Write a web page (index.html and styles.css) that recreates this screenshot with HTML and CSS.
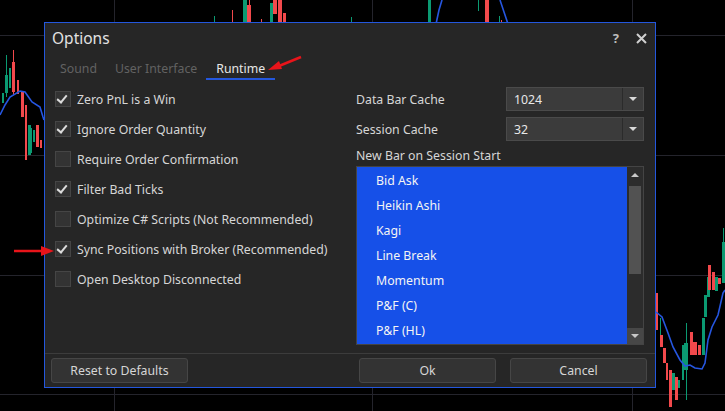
FILE: index.html
```html
<!DOCTYPE html>
<html>
<head>
  <title>Options</title>
  <meta name="viewport" content="width=device-width, initial-scale=1">
  <link rel="stylesheet" href="styles.css">
</head>
<body>

  <div class="screen">
    <!-- chart behind the dialog -->
    <svg class="chart" width="725" height="411" viewBox="0 0 725 411">
      <g class="grid">
        <line x1="0" y1="35.5" x2="725" y2="35.5"/>
        <line x1="0" y1="155.5" x2="725" y2="155.5"/>
        <line x1="0" y1="275.5" x2="725" y2="275.5"/>
        <line x1="0" y1="394.5" x2="725" y2="394.5"/>
        <line x1="114.5" y1="0" x2="114.5" y2="411"/>
        <line x1="372.5" y1="0" x2="372.5" y2="411"/>
        <line x1="632.5" y1="0" x2="632.5" y2="411"/>
      </g>
      <g class="up">
        <rect x="214" y="16" width="1" height="8"/>
        <rect x="243" y="0" width="4" height="24"/>
        <rect x="270" y="3" width="3" height="21"/>
        <rect x="351" y="17" width="1" height="7"/>
        <rect x="428" y="0" width="3" height="24"/>
        <rect x="478" y="0" width="1" height="11"/>
        <rect x="499" y="16" width="1" height="8"/>
        <rect x="2" y="93" width="2" height="10"/>
        <rect x="6" y="55" width="1" height="42"/>
        <rect x="5" y="75" width="3" height="18"/>
        <rect x="9" y="68" width="2" height="20"/>
        <rect x="28" y="125" width="3" height="30"/>
        <rect x="31" y="128" width="1" height="25"/>
        <rect x="33" y="130" width="2" height="12"/>
        <rect x="660" y="318" width="1" height="20"/>
        <rect x="672" y="373" width="3" height="17"/>
        <rect x="678" y="380" width="2" height="8"/>
        <rect x="682" y="345" width="2" height="35"/>
        <rect x="684" y="343" width="4" height="27"/>
        <rect x="686" y="323" width="1" height="77"/>
        <rect x="702" y="318" width="3" height="37"/>
        <rect x="704" y="295" width="3" height="22"/>
        <rect x="707" y="277" width="3" height="20"/>
        <rect x="715" y="277" width="3" height="14"/>
        <rect x="722" y="242" width="3" height="41"/>
        <rect x="723" y="228" width="1" height="14"/>
      </g>
      <g class="down">
        <rect x="232" y="10" width="1" height="14"/>
        <rect x="247" y="5" width="4" height="19"/>
        <rect x="249" y="0" width="1" height="6"/>
        <rect x="261" y="19" width="1" height="5"/>
        <rect x="273" y="0" width="4" height="14"/>
        <rect x="278" y="0" width="4" height="24"/>
        <rect x="283" y="13" width="3" height="11"/>
        <rect x="485" y="0" width="4" height="24"/>
        <rect x="501" y="20" width="1" height="4"/>
        <rect x="12" y="62" width="3" height="30"/>
        <rect x="13" y="50" width="1" height="45"/>
        <rect x="17" y="80" width="2" height="14"/>
        <rect x="21" y="92" width="3" height="25"/>
        <rect x="25" y="105" width="2" height="55"/>
        <rect x="36" y="125" width="3" height="22"/>
        <rect x="40" y="140" width="2" height="8"/>
        <rect x="656" y="293" width="2" height="37"/>
        <rect x="660" y="335" width="3" height="12"/>
        <rect x="663" y="348" width="3" height="15"/>
        <rect x="666" y="363" width="2" height="17"/>
        <rect x="669" y="370" width="3" height="37"/>
        <rect x="675" y="377" width="3" height="23"/>
        <rect x="690" y="332" width="3" height="23"/>
        <rect x="693" y="342" width="4" height="13"/>
        <rect x="698" y="345" width="3" height="10"/>
        <rect x="708" y="265" width="3" height="25"/>
        <rect x="712" y="272" width="3" height="18"/>
        <rect x="718" y="278" width="3" height="6"/>
      </g>
      <g class="avg">
        <polyline points="436,24 439,10 442,0"/>
        <polyline points="500,0 504,12 508,24"/>
        <polyline points="0,115 5,105 10,97 20,91 25,92 32,102 40,107 43,117 44,120"/>
        <polyline points="656,312 662,317 668,333 673,347 680,360 685,366 690,365 695,368 702,369 705,363 708,340 712,327 718,315 723,293 725,290"/>
      </g>
    </svg>

    <div class="dialog">
      <div class="titlebar">
        <span class="title">Options</span>
        <span class="title-buttons">
          <span class="help">?</span>
          <svg class="close" width="11" height="11" viewBox="0 0 11 11">
            <path d="M1 1 L10 10 M10 1 L1 10"/>
          </svg>
        </span>
      </div>

      <div class="tabs">
        <span class="tab">Sound</span>
        <span class="tab">User Interface</span>
        <span class="tab active">Runtime</span>
      </div>

      <div class="content">
        <div class="left-col">
          <label class="check-row"><span class="box checked"></span>Zero PnL is a Win</label>
          <label class="check-row"><span class="box checked"></span>Ignore Order Quantity</label>
          <label class="check-row"><span class="box"></span>Require Order Confirmation</label>
          <label class="check-row"><span class="box checked"></span>Filter Bad Ticks</label>
          <label class="check-row"><span class="box"></span>Optimize C# Scripts (Not Recommended)</label>
          <label class="check-row"><span class="box checked"></span>Sync Positions with Broker (Recommended)</label>
          <label class="check-row"><span class="box"></span>Open Desktop Disconnected</label>
        </div>

        <div class="right-col">
          <div class="field-row">
            <span class="field-label">Data Bar Cache</span>
            <div class="select">
              <span class="select-value">1024</span>
              <span class="select-arrow"></span>
            </div>
          </div>
          <div class="field-row">
            <span class="field-label">Session Cache</span>
            <div class="select">
              <span class="select-value">32</span>
              <span class="select-arrow"></span>
            </div>
          </div>
          <div class="list-label">New Bar on Session Start</div>
          <div class="list">
            <div class="list-items">
              <div class="list-item">Bid Ask</div>
              <div class="list-item">Heikin Ashi</div>
              <div class="list-item">Kagi</div>
              <div class="list-item">Line Break</div>
              <div class="list-item">Momentum</div>
              <div class="list-item">P&amp;F (C)</div>
              <div class="list-item">P&amp;F (HL)</div>
            </div>
            <div class="scrollbar">
              <span class="scroll-btn up-btn"></span>
              <div class="scroll-track"><div class="scroll-thumb"></div></div>
              <span class="scroll-btn down-btn"></span>
            </div>
          </div>
        </div>
      </div>

      <div class="footer">
        <button class="btn btn-reset">Reset to Defaults</button>
        <div class="footer-right">
          <button class="btn">Ok</button>
          <button class="btn">Cancel</button>
        </div>
      </div>
    </div>

    <!-- red pointer arrows drawn on the screenshot -->
    <svg class="marker marker-tab" width="40" height="20" viewBox="0 0 40 20">
      <path d="M36 2 L14 11" class="marker-line"/>
      <path d="M3 15 L14 6 L17 14 Z" class="marker-head"/>
    </svg>
    <svg class="marker marker-sync" width="44" height="14" viewBox="0 0 44 14">
      <path d="M1 7 L30 7" class="marker-line"/>
      <path d="M28 2 L41 7 L28 12 Z" class="marker-head"/>
    </svg>
  </div>

</body>
</html>
```

FILE: styles.css
```css
body {
  margin: 0;
  background-color: #000;
  font-family: "Noto Sans", "Open Sans", sans-serif;
  font-size: 12.3px;
  color: #d6d6d6;
}

.screen {
  position: relative;
  width: 725px;
  height: 411px;
  overflow: hidden;
  background-color: #000;
}

/* chart */
.chart {
  position: absolute;
  left: 0;
  top: 0;
}

.grid line {
  stroke: #24242c;
  stroke-width: 1;
}

.up rect {
  fill: #0b9a72;
}

.down rect {
  fill: #f2494c;
}

.avg polyline {
  fill: none;
  stroke: #2656e0;
  stroke-width: 1.6;
}

/* dialog window */
.dialog {
  position: absolute;
  left: 44px;
  top: 22px;
  width: 610px;
  height: 364px;
  border: 1px solid #2457dd;
  background-color: #262626;
  display: flex;
  flex-direction: column;
}

.titlebar {
  height: 30px;
  display: flex;
  align-items: center;
  justify-content: space-between;
  padding: 0 8px 0 7px;
}

.title {
  font-size: 15.5px;
  color: #e2e2e2;
}

.title-buttons {
  display: flex;
  align-items: center;
  gap: 17px;
}

.help {
  font-size: 13px;
  font-weight: bold;
  color: #bdbdbd;
}

.close path {
  stroke: #d0d0d0;
  stroke-width: 2;
}

.tabs {
  height: 27px;
  display: flex;
  padding-left: 6px;
}

.tab {
  padding: 5px 9px 0;
  color: #626262;
  display: flex;
  align-items: center;
  border-bottom: 2px solid transparent;
}

.tab.active {
  color: #e6e6e6;
  border-bottom-color: #2457dd;
  padding: 5px 10px 0;
}

.content {
  flex: 1;
  display: flex;
  padding: 4px 11px 0 10px;
  border-bottom: 1px solid #3c3c3c;
}

.left-col {
  width: 301px;
  display: flex;
  flex-direction: column;
}

.check-row {
  height: 30px;
  display: flex;
  align-items: center;
  gap: 6px;
}

.box {
  width: 14px;
  height: 14px;
  border: 1px solid #454545;
  background-color: #333;
  position: relative;
}

.box.checked::after {
  content: "";
  position: absolute;
  left: 3px;
  top: 1px;
  width: 4px;
  height: 8px;
  border-right: 2px solid #dcdcdc;
  border-bottom: 2px solid #dcdcdc;
  transform: rotate(40deg);
}

.right-col {
  flex: 1;
  display: flex;
  flex-direction: column;
}

.field-row {
  height: 30px;
  display: flex;
  align-items: center;
}

.field-label {
  width: 150px;
}

.select {
  flex: 1;
  height: 22px;
  display: flex;
  border: 1px solid #4a4a4a;
  background-color: #3b3b3b;
}

.select-value {
  flex: 1;
  padding-left: 7px;
  display: flex;
  align-items: center;
  color: #e8e8e8;
}

.select-arrow {
  width: 20px;
  border-left: 1px solid #2b2b2b;
  position: relative;
}

.select-arrow::after {
  content: "";
  position: absolute;
  left: 6px;
  top: 9px;
  border-left: 4px solid transparent;
  border-right: 4px solid transparent;
  border-top: 4px solid #d8d8d8;
}

.list-label {
  height: 22px;
  display: flex;
  align-items: center;
}

.list {
  height: 177px;
  display: flex;
  border: 1px solid #444;
  background-color: #1650e8;
}

.list-items {
  flex: 1;
  padding-top: 1px;
}

.list-item {
  height: 25px;
  padding-left: 19px;
  display: flex;
  align-items: center;
  color: #f4f4f4;
}

.scrollbar {
  width: 16px;
  display: flex;
  flex-direction: column;
  background-color: #2c2c2c;
}

.scroll-btn {
  height: 16px;
  position: relative;
}

.down-btn {
  background-color: #474747;
}

.up-btn::after,
.down-btn::after {
  content: "";
  position: absolute;
  left: 4px;
  border-left: 4px solid transparent;
  border-right: 4px solid transparent;
}

.up-btn::after {
  top: 6px;
  border-bottom: 4px solid #c8c8c8;
}

.down-btn::after {
  top: 6px;
  border-top: 4px solid #c8c8c8;
}

.scroll-track {
  flex: 1;
  padding: 3px 2px;
}

.scroll-thumb {
  height: 88px;
  background-color: #525252;
}

.footer {
  height: 33px;
  display: flex;
  align-items: center;
  justify-content: space-between;
  padding: 0 8px 0 6px;
}

.footer-right {
  display: flex;
  gap: 14px;
}

.btn {
  width: 137px;
  height: 25px;
  font-family: inherit;
  font-size: 12.3px;
  color: #d6d6d6;
  background-color: #333;
  border: 1px solid #464646;
  border-radius: 3px;
  padding: 0;
}

/* annotation arrows */
.marker {
  position: absolute;
}

.marker-tab {
  left: 265px;
  top: 55px;
}

.marker-sync {
  left: 13px;
  top: 244px;
}

.marker-line {
  stroke: #e8141a;
  stroke-width: 2.5;
  fill: none;
}

.marker-head {
  fill: #e8141a;
}
```
